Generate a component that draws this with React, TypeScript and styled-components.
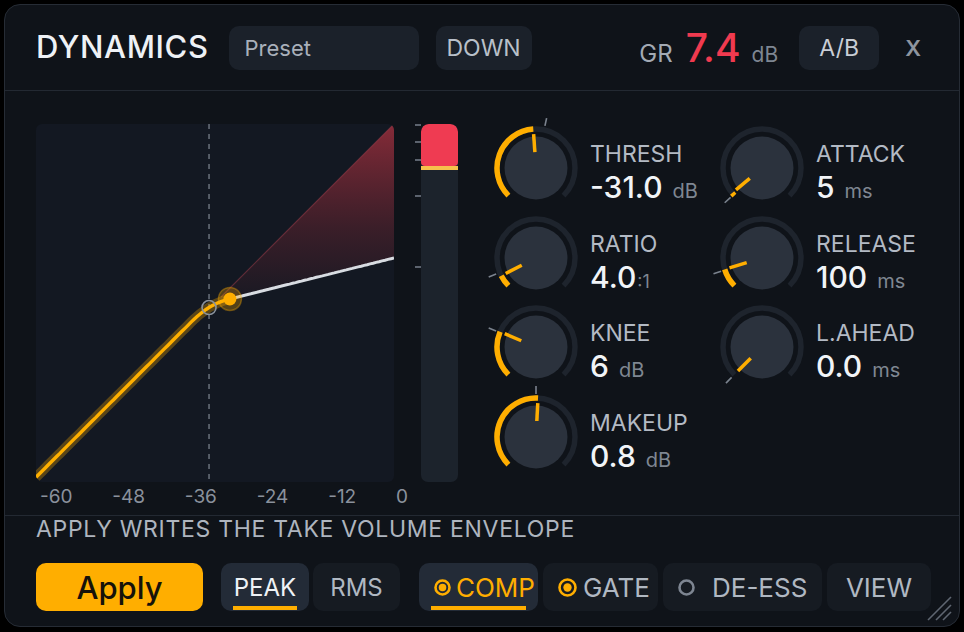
import React from 'react';
import styled, { createGlobalStyle } from 'styled-components';

const GlobalStyle = createGlobalStyle`
  html, body {
    margin: 0;
    padding: 0;
    background: #000;
  }
  body {
    width: 964px;
    height: 632px;
    overflow: hidden;
    font-family: Inter, "Noto Sans", "Liberation Sans", sans-serif;
  }
  #root {
    padding: 4px 0 0 4px;
  }
`;

const ORANGE = '#ffae00';

const Panel = styled.div`
  position: relative;
  width: 956px;
  height: 623px;
  box-sizing: border-box;
  border: 1px solid #262c35;
  border-radius: 16px;
  background: #0f1319;
  display: flex;
  flex-direction: column;
  overflow: hidden;
`;

const Header = styled.header`
  height: 86px;
  box-sizing: border-box;
  border-bottom: 1px solid #232932;
  display: flex;
  align-items: center;
  padding: 0 38px 0 31px;
`;

const Title = styled.h1`
  margin: 0 20px 3px 0;
  font-size: 31px;
  font-weight: 500;
  letter-spacing: 0.6px;
  color: #eef1f5;
`;

const Field = styled.div<{ $w: number; $center?: boolean }>`
  width: ${p => p.$w}px;
  height: 44px;
  box-sizing: border-box;
  border-radius: 10px;
  background: #1b212a;
  display: flex;
  align-items: center;
  justify-content: ${p => (p.$center ? 'center' : 'flex-start')};
  padding-left: ${p => (p.$center ? 0 : 16)}px;
  font-size: ${p => (p.$center ? 23 : 22)}px;
  color: ${p => (p.$center ? '#b9c0c9' : '#a9b0ba')};
`;

const Spacer = styled.div`
  flex: 1;
`;

const Reading = styled.div`
  display: flex;
  align-items: baseline;
`;

const ReadingLabel = styled.span`
  font-size: 24px;
  color: #a3aab4;
  margin-right: 13px;
`;

const ReadingValue = styled.span`
  font-size: 39px;
  font-weight: 500;
  color: #f03a4f;
  margin-right: 11px;
`;

const ReadingUnit = styled.span`
  font-size: 21px;
  color: #7e8692;
`;

const Close = styled.div`
  margin-left: 26px;
  font-size: 22px;
  font-weight: 600;
  color: #8e959f;
`;

const Main = styled.section`
  height: 425px;
  box-sizing: border-box;
  border-bottom: 1px solid #232932;
  padding: 33px 0 0 31px;
  display: flex;
  align-items: flex-start;
`;

const GraphColumn = styled.div`
  width: 358px;
`;

const GraphBox = styled.div`
  width: 358px;
  height: 358px;
  border-radius: 6px;
  background: #131822;
  overflow: hidden;
`;

const AxisRow = styled.div`
  width: 376px;
  box-sizing: border-box;
  padding: 0 4px;
  margin-top: 4px;
  display: flex;
  justify-content: space-between;
  font-size: 19px;
  line-height: 22px;
  color: #8a919c;
`;

const Scale = styled.svg`
  margin-left: 21px;
  flex: none;
`;

const Meter = styled.div`
  width: 37px;
  height: 358px;
  border-radius: 7px;
  background: #1c232c;
  display: flex;
  flex-direction: column;
  overflow: hidden;
`;

const MeterFill = styled.div`
  height: 42px;
  border-radius: 8px 8px 4px 4px;
  background: #ef3b52;
`;

const MeterMark = styled.div`
  height: 4px;
  background: #f6c14c;
`;

const KnobGrid = styled.div`
  margin-left: 34px;
  display: grid;
  grid-template-columns: 226px 226px;
  grid-auto-rows: 88px;
  row-gap: 1.5px;
`;

const KnobCell = styled.div`
  display: flex;
  align-items: flex-start;
  gap: 10px;
`;

const KnobText = styled.div`
  padding-top: 18px;
`;

const KnobLabel = styled.div`
  font-size: 23px;
  line-height: 24px;
  color: #b3bac4;
`;

const KnobValue = styled.div`
  margin-top: 5px;
  font-size: 30px;
  line-height: 32px;
  font-weight: 500;
  color: #f1f4f7;
  white-space: nowrap;
`;

const KnobUnit = styled.span<{ $tight?: boolean }>`
  margin-left: ${p => (p.$tight ? 1 : 10)}px;
  font-size: ${p => (p.$tight ? 18 : 20)}px;
  font-weight: 400;
  color: #7f8792;
`;

const Footer = styled.footer`
  flex: 1;
  padding: 0 0 0 31px;
`;

const Note = styled.p`
  margin: 0;
  font-size: 23px;
  line-height: 26px;
  letter-spacing: 0.7px;
  color: #aeb5bf;
`;

const Controls = styled.div`
  margin-top: 21px;
  display: flex;
  align-items: center;
`;

const ApplyButton = styled.button`
  width: 167px;
  height: 48px;
  margin-right: 18px;
  border: 0;
  border-radius: 10px;
  background: ${ORANGE};
  color: #16120a;
  font-family: inherit;
  font-size: 31px;
  font-weight: 500;
  padding: 0;
`;

const Group = styled.div<{ $gap: number; $after?: number }>`
  display: flex;
  gap: ${p => p.$gap}px;
  margin-right: ${p => p.$after ?? 0}px;
`;

const Button = styled.div<{
  $w: number;
  $active?: boolean;
  $tone?: string;
  $left?: boolean;
  $gap?: number;
  $size?: number;
}>`
  position: relative;
  width: ${p => p.$w}px;
  height: 48px;
  box-sizing: border-box;
  border-radius: 10px;
  background: ${p => (p.$active ? '#232b37' : '#161b22')};
  color: ${p => p.$tone ?? '#b0b8c2'};
  font-size: ${p => p.$size ?? 24}px;
  display: flex;
  align-items: center;
  justify-content: ${p => (p.$left ? 'flex-start' : 'center')};
  padding-left: ${p => (p.$left ? 15 : 0)}px;
  gap: ${p => p.$gap ?? 6}px;
  white-space: nowrap;

  &::after {
    content: '';
    display: ${p => (p.$active ? 'block' : 'none')};
    position: absolute;
    left: 12px;
    right: 12px;
    bottom: 1px;
    height: 4px;
    background: ${ORANGE};
  }
`;

const Grip = styled.svg`
  position: absolute;
  right: 6px;
  bottom: 4px;
`;

const CX = 44;

function pt(r: number, deg: number): [number, number] {
  const a = (deg * Math.PI) / 180;
  return [CX + r * Math.sin(a), CX - r * Math.cos(a)];
}

function arc(r: number, a0: number, a1: number) {
  const [x0, y0] = pt(r, a0);
  const [x1, y1] = pt(r, a1);
  return `M${x0} ${y0} A${r} ${r} 0 ${a1 - a0 > 180 ? 1 : 0} 1 ${x1} ${y1}`;
}

interface KnobProps {
  label: string;
  value: string;
  unit: string;
  angle: number;
  def: number;
  tight?: boolean;
}

function Knob({ label, value, unit, angle, def, tight }: KnobProps) {
  const [px0, py0] = pt(16, angle);
  const [px1, py1] = pt(34, angle);
  const [dx0, dy0] = pt(43, def);
  const [dx1, dy1] = pt(51, def);

  return (
    <KnobCell>
      <svg width={88} height={88} style={{ overflow: 'visible', flex: 'none' }}>
        <path d={arc(39, -135, 135)} fill='none' stroke='#1e242d' strokeWidth={5.5} />
        {angle > -134 && (
          <path d={arc(39, -135, angle)} fill='none' stroke={ORANGE} strokeWidth={5.5} />
        )}
        <circle cx={CX} cy={CX} r={31.5} fill='#2b323d' />
        <line x1={dx0} y1={dy0} x2={dx1} y2={dy1} stroke='#7b838e' strokeWidth={1.6} />
        <line x1={px0} y1={py0} x2={px1} y2={py1} stroke={ORANGE} strokeWidth={3.5} />
      </svg>
      <KnobText>
        <KnobLabel>{label}</KnobLabel>
        <KnobValue>
          {value}
          <KnobUnit $tight={tight}>{unit}</KnobUnit>
        </KnobValue>
      </KnobText>
    </KnobCell>
  );
}

const knobs: KnobProps[] = [
  { label: 'THRESH', value: '-31.0', unit: 'dB', angle: -4, def: 12 },
  { label: 'ATTACK', value: '5', unit: 'ms', angle: -130, def: -133 },
  { label: 'RATIO', value: '4.0', unit: ':1', tight: true, angle: -117, def: -112 },
  { label: 'RELEASE', value: '100', unit: 'ms', angle: -107, def: -108 },
  { label: 'KNEE', value: '6', unit: 'dB', angle: -67, def: -68 },
  { label: 'L.AHEAD', value: '0.0', unit: 'ms', angle: -135, def: -135 },
  { label: 'MAKEUP', value: '0.8', unit: 'dB', angle: 3, def: 0 },
];

// transfer curve: threshold -31, ratio 4, knee 6, makeup 0.8
const G = 358;
const TH = -31;
const RATIO = 4;
const KNEE = 6;
const MAKEUP = 0.8;

function transfer(i: number) {
  const d = i - TH;
  let o: number;
  if (2 * d < -KNEE) o = i;
  else if (2 * Math.abs(d) <= KNEE) o = i + ((1 / RATIO - 1) * (d + KNEE / 2) ** 2) / (2 * KNEE);
  else o = TH + d / RATIO;
  return o + MAKEUP;
}

const gx = (db: number) => ((db + 60) / 60) * G;
const gy = (db: number) => G - ((db + 60) / 60) * G;

function curve(from: number, to: number) {
  const pts: string[] = [];
  for (let i = from; i <= to + 0.001; i += 0.5) {
    pts.push(`${gx(i).toFixed(1)},${gy(transfer(i)).toFixed(1)}`);
  }
  return pts;
}

const DOT = -27.5;

function TransferGraph() {
  const low = curve(-60, DOT);
  const high = curve(DOT, 0);
  const band = [`${gx(-29)},${gy(-29)}`, `${G},0`, ...curve(-29, 0).reverse()];
  const [tx, ty] = [gx(TH), gy(transfer(TH))];
  const [dx, dy] = [gx(DOT), gy(transfer(DOT))];

  return (
    <svg width={G} height={G}>
      <defs>
        <linearGradient id='band' gradientUnits='userSpaceOnUse' x1={0} y1={0} x2={0} y2={178}>
          <stop offset='0' stopColor='#a3303e' stopOpacity={0.8} />
          <stop offset='0.6' stopColor='#8a2a36' stopOpacity={0.32} />
          <stop offset='1' stopColor='#8a2a36' stopOpacity={0.04} />
        </linearGradient>
      </defs>
      <polygon points={band.join(' ')} fill='url(#band)' />
      <line x1={gx(-29)} y1={gy(-29)} x2={G} y2={0} stroke='#b0424f' strokeOpacity={0.45} strokeWidth={1.2} />
      <line x1={tx} y1={0} x2={tx} y2={G} stroke='#6a717c' strokeWidth={1.5} strokeDasharray='5 5' />
      <polyline points={low.join(' ')} fill='none' stroke={ORANGE} strokeOpacity={0.3} strokeWidth={10} />
      <polyline points={low.join(' ')} fill='none' stroke='#ffb000' strokeWidth={3.4} />
      <polyline points={high.join(' ')} fill='none' stroke='#d8dce2' strokeWidth={3} />
      <circle cx={tx} cy={ty} r={7} fill='none' stroke='#8a929c' strokeWidth={1.6} />
      <circle cx={dx} cy={dy} r={11.5} fill={ORANGE} fillOpacity={0.28} stroke={ORANGE} strokeOpacity={0.35} strokeWidth={1.5} />
      <circle cx={dx} cy={dy} r={6.5} fill={ORANGE} />
    </svg>
  );
}

function Ring({ size, filled }: { size: number; filled: boolean }) {
  const c = size / 2;
  const color = filled ? ORANGE : '#7d8591';
  return (
    <svg width={size} height={size} style={{ flex: 'none' }}>
      <circle cx={c} cy={c} r={c - 1.5} fill='none' stroke={color} strokeWidth={2.6} />
      {filled && <circle cx={c} cy={c} r={size * 0.22} fill={color} />}
    </svg>
  );
}

export default function App() {
  return (
    <>
      <GlobalStyle />
      <Panel>
        <Header>
          <Title>DYNAMICS</Title>
          <Field $w={190} style={{ marginRight: 17 }}>Preset</Field>
          <Field $w={96} $center>DOWN</Field>
          <Spacer />
          <Reading>
            <ReadingLabel>GR</ReadingLabel>
            <ReadingValue>7.4</ReadingValue>
            <ReadingUnit>dB</ReadingUnit>
          </Reading>
          <Field $w={80} $center style={{ marginLeft: 21, color: '#c9ced6' }}>A/B</Field>
          <Close>X</Close>
        </Header>

        <Main>
          <GraphColumn>
            <GraphBox>
              <TransferGraph />
            </GraphBox>
            <AxisRow>
              {['-60', '-48', '-36', '-24', '-12', '0'].map(t => (
                <span key={t}>{t}</span>
              ))}
            </AxisRow>
          </GraphColumn>
          <Scale width={6} height={358}>
            {[1, 18, 36, 72, 143].map(y => (
              <line key={y} x1={0} y1={y} x2={6} y2={y} stroke='#5c636e' strokeWidth={2} />
            ))}
          </Scale>
          <Meter>
            <MeterFill />
            <MeterMark />
          </Meter>
          <KnobGrid>
            {knobs.map(k => (
              <Knob key={k.label} {...k} />
            ))}
          </KnobGrid>
        </Main>

        <Footer>
          <Note>APPLY WRITES THE TAKE VOLUME ENVELOPE</Note>
          <Controls>
            <ApplyButton>Apply</ApplyButton>
            <Group $gap={4} $after={19}>
              <Button $w={88} $active $tone='#eef2f6'>PEAK</Button>
              <Button $w={87}>RMS</Button>
            </Group>
            <Group $gap={5}>
              <Button $w={119} $active $left $tone={ORANGE} $size={26} $gap={5}>
                <Ring size={17} filled />
                COMP
              </Button>
              <Button $w={115} $left $gap={6} $size={26}>
                <Ring size={19} filled />
                GATE
              </Button>
              <Button $w={159} $left $gap={17} $size={26}>
                <Ring size={17} filled={false} />
                DE-ESS
              </Button>
              <Button $w={104} $size={26}>VIEW</Button>
            </Group>
          </Controls>
        </Footer>

        <Grip width={28} height={28}>
          <line x1={3} y1={26} x2={26} y2={3} stroke='#5f6671' strokeWidth={1.6} />
          <line x1={11} y1={26} x2={26} y2={11} stroke='#5f6671' strokeWidth={1.6} />
          <line x1={18} y1={26} x2={26} y2={18} stroke='#5f6671' strokeWidth={1.6} />
        </Grip>
      </Panel>
    </>
  );
}
